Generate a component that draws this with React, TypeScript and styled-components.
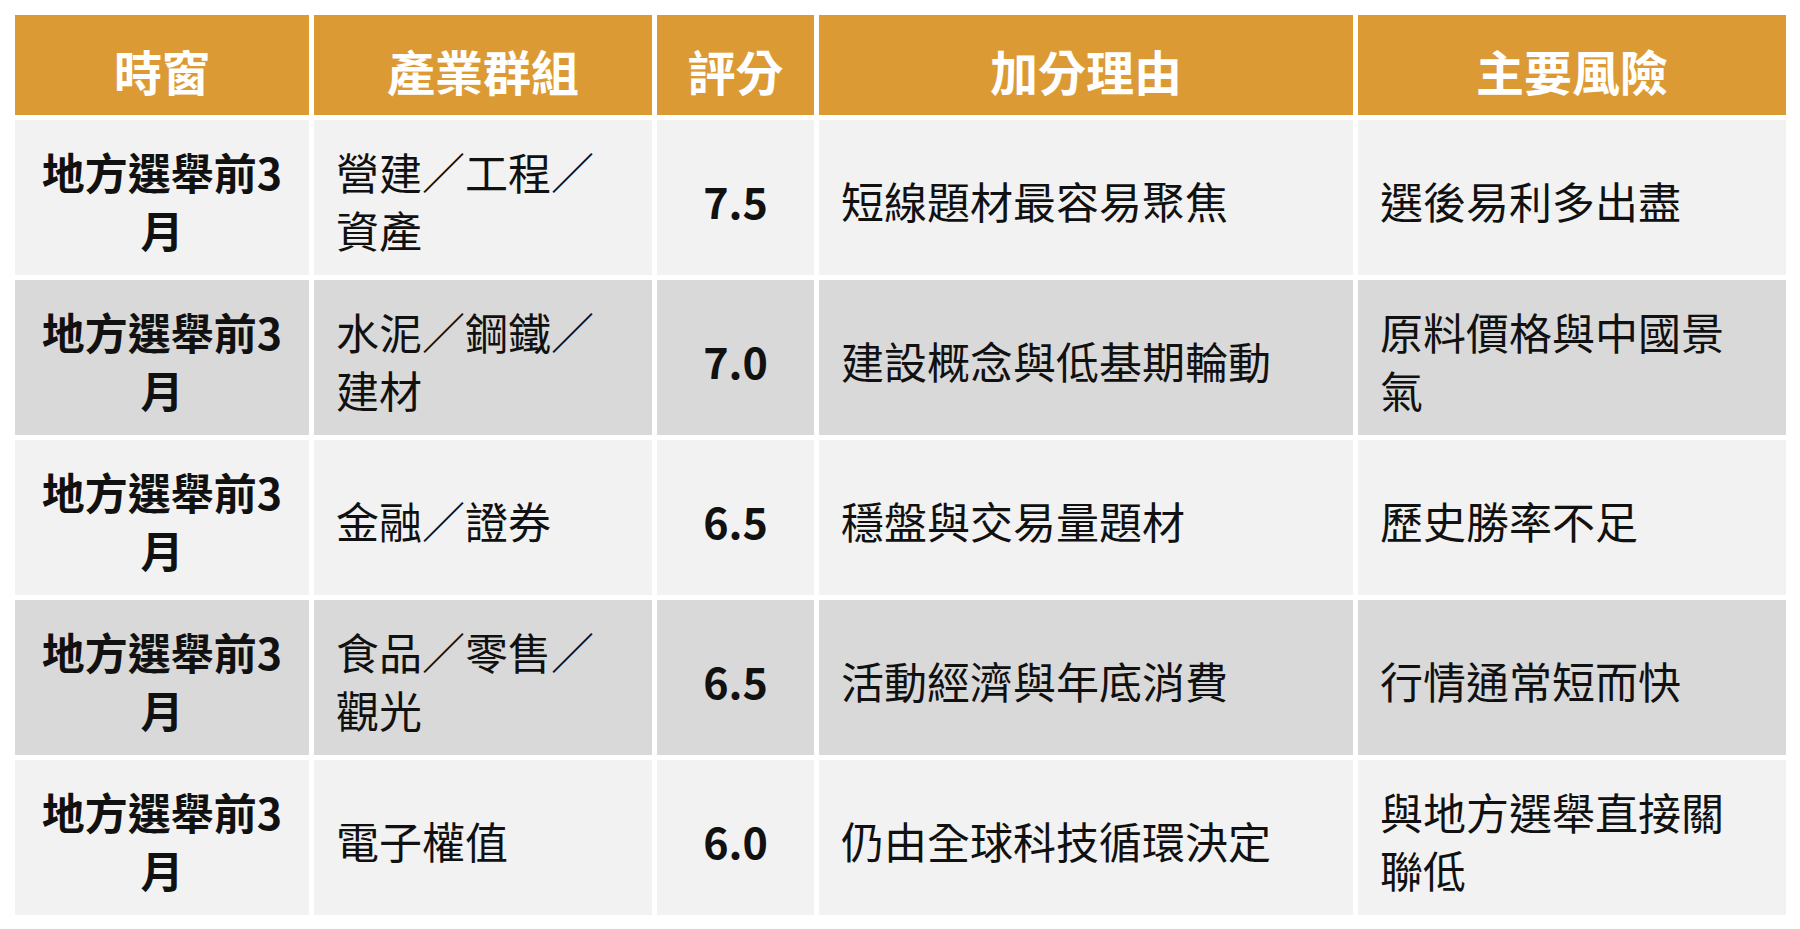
import React from "react";
import styled, { createGlobalStyle } from "styled-components";

const GlobalStyle = createGlobalStyle`
  html, body {
    margin: 0;
    padding: 0;
    background: #ffffff;
  }
  body {
    font-family: "Noto Sans CJK TC", "Noto Sans CJK SC", "Noto Sans", sans-serif;
  }
`;

const Page = styled.div`
  padding: 15px 14px 14px 15px;
  background: #ffffff;
`;

const Table = styled.div`
  display: grid;
  grid-template-columns: 294px 338px 157px 534px 428px;
  grid-template-rows: 100px repeat(5, 155px);
  gap: 5px;
  width: 1771px;
`;

const HeadCell = styled.div`
  display: flex;
  align-items: center;
  justify-content: center;
  box-sizing: border-box;
  padding: 11px 10px 0;
  background: #dc9a35;
  color: #ffffff;
  font-size: 48px;
  font-weight: 700;
  line-height: 1.2;
`;

const Cell = styled.div<{ $alt: boolean; $center?: boolean; $bold?: boolean }>`
  display: flex;
  align-items: center;
  justify-content: ${(p) => (p.$center ? "center" : "flex-start")};
  text-align: ${(p) => (p.$center ? "center" : "left")};
  box-sizing: border-box;
  padding: 4px 22px 0;
  background: ${(p) => (p.$alt ? "#d9d9d9" : "#f2f2f2")};
  color: #111111;
  font-size: 43px;
  font-weight: ${(p) => (p.$bold ? 700 : 400)};
  line-height: 58px;
`;

const headers = ["時窗", "產業群組", "評分", "加分理由", "主要風險"];

const rows = [
  ["地方選舉前3月", "營建／工程／資產", "7.5", "短線題材最容易聚焦", "選後易利多出盡"],
  ["地方選舉前3月", "水泥／鋼鐵／建材", "7.0", "建設概念與低基期輪動", "原料價格與中國景氣"],
  ["地方選舉前3月", "金融／證券", "6.5", "穩盤與交易量題材", "歷史勝率不足"],
  ["地方選舉前3月", "食品／零售／觀光", "6.5", "活動經濟與年底消費", "行情通常短而快"],
  ["地方選舉前3月", "電子權值", "6.0", "仍由全球科技循環決定", "與地方選舉直接關聯低"],
];

export default function App() {
  return (
    <>
      <GlobalStyle />
      <Page>
        <Table>
          {headers.map((h) => (
            <HeadCell key={h}>{h}</HeadCell>
          ))}
          {rows.map((r, i) => {
            const alt = i % 2 === 1;
            return (
              <React.Fragment key={i}>
                <Cell $alt={alt} $center $bold>{r[0]}</Cell>
                <Cell $alt={alt}>{r[1]}</Cell>
                <Cell $alt={alt} $center $bold>{r[2]}</Cell>
                <Cell $alt={alt}>{r[3]}</Cell>
                <Cell $alt={alt}>{r[4]}</Cell>
              </React.Fragment>
            );
          })}
        </Table>
      </Page>
    </>
  );
}
